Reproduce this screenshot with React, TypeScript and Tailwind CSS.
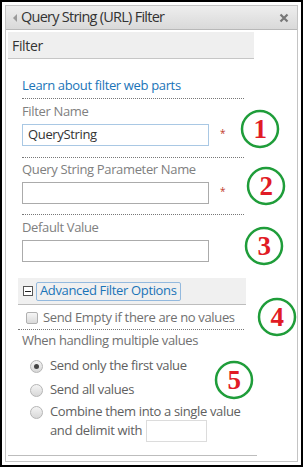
import React from "react";

const font = { fontFamily: '"Open Sans", "Noto Sans", sans-serif' };

function Badge({ n, x, y }: { n: string; x: number; y: number }) {
  return (
    <svg
      width="40"
      height="40"
      viewBox="0 0 40 40"
      className="absolute"
      style={{ left: x - 20, top: y - 20 }}
    >
      <circle cx="20" cy="20" r="18" fill="none" stroke="#1f9d3a" strokeWidth="2.5" />
      <text
        x="20"
        y="29"
        textAnchor="middle"
        fontFamily='"Liberation Serif", serif'
        fontWeight="bold"
        fontSize="27"
        fill="#e11b25"
      >
        {n}
      </text>
    </svg>
  );
}

function Dotted({ w = 222 }: { w?: number }) {
  return <div className="h-0 border-t border-dotted border-[#777]" style={{ width: w }} />;
}

function Radio({ checked }: { checked?: boolean }) {
  return (
    <span className="w-[13px] h-[13px] rounded-full border border-[#b5b5b5] bg-gradient-to-b from-[#f4f4f4] to-[#d8d8d8] flex items-center justify-center shrink-0">
      {checked && <span className="w-[5px] h-[5px] rounded-full bg-[#444]" />}
    </span>
  );
}

export default function App() {
  return (
    <div className="w-[303px] h-[467px] border-2 border-black bg-white p-[3px] relative tracking-[-0.35px]" style={font}>
      <div className="h-full border border-[#c4c4c4] flex flex-col">
        <div className="h-[24px] shrink-0 bg-gradient-to-b from-[#eeeeee] to-[#d9d9d9] border-b border-[#b8b8b8] flex items-center pl-[6px] pr-[8px]">
          <svg width="6" height="8" viewBox="0 0 6 8" className="mr-[3px]">
            <path d="M5 0 L1 4 L5 8 Z" fill="#9a9a9a" />
          </svg>
          <span className="text-[14.5px] tracking-[-0.75px] text-[#333] leading-none">Query String (URL) Filter</span>
          <span className="ml-auto">
            <svg width="10" height="10" viewBox="0 0 10 10">
              <path d="M1.5 1.5 L8.5 8.5 M8.5 1.5 L1.5 8.5" stroke="#777" strokeWidth="2.2" />
            </svg>
          </span>
        </div>
        <div className="pl-[2px] pt-[2px]">
          <div className="w-[246px] h-[27px] bg-[#efefef] border-b border-[#c6c6c6] flex items-center pl-[4px] text-[14px] text-[#333]">
            Filter
          </div>
        </div>
        <div className="pl-[16px] flex flex-col">
          <div className="mt-[18px] h-[18px] flex items-center text-[13px] text-[#1a74b8]">
            Learn about filter web parts
          </div>
          <div className="mt-[3px]"><Dotted /></div>
          <div className="mt-[4px] h-[18px] flex items-center text-[13px] text-[#808080]">Filter Name</div>
          <div className="mt-[3px] flex items-center">
            <div className="w-[187px] h-[22px] border border-[#a9c8e4] flex items-center pl-[5px] text-[13px] text-[#333]">
              QueryString
            </div>
            <span className="ml-[11px] text-[10px] text-[#c0392b] -mt-[4px]">*</span>
          </div>
          <div className="mt-[11px]"><Dotted /></div>
          <div className="mt-[3px] h-[18px] flex items-center text-[13px] text-[#808080]">Query String Parameter Name</div>
          <div className="mt-[3px] flex items-center">
            <div className="w-[187px] h-[22px] border border-[#ababab]" />
            <span className="ml-[11px] text-[10px] text-[#c0392b] -mt-[4px]">*</span>
          </div>
          <div className="mt-[10px]"><Dotted /></div>
          <div className="mt-[4px] h-[18px] flex items-center text-[13px] text-[#808080]">Default Value</div>
          <div className="mt-[3px]">
            <div className="w-[187px] h-[22px] border border-[#ababab]" />
          </div>
        </div>
        <div className="pl-[12px] flex flex-col">
          <div className="mt-[16px] w-[228px] h-[27px] bg-[#f0f0f0] border-b border-[#bdbdbd] flex items-center pl-[5px]">
            <span className="w-[10px] h-[10px] border border-[#555] bg-white flex items-center justify-center shrink-0">
              <span className="w-[6px] h-[1px] bg-[#222]" />
            </span>
            <span className="ml-[3px] h-[19px] px-[3px] border border-[#93b9de] rounded-[2px] flex items-center text-[13px] text-[#1a74b8]">
              Advanced Filter Options
            </span>
          </div>
          <div className="mt-[4px] h-[18px] flex items-center pl-[8px] text-[13px] text-[#707070]">
            <span className="w-[12px] h-[12px] rounded-[2px] border border-[#b0b0b0] bg-gradient-to-b from-[#f6f6f6] to-[#dadada] mr-[5px] shrink-0" />
            Send Empty if there are no values
          </div>
          <div className="mt-[2px]"><Dotted w={226} /></div>
        </div>
        <div className="pl-[16px] flex flex-col">
          <div className="mt-[2px] h-[18px] flex items-center text-[13px] text-[#707070]">When handling multiple values</div>
          <div className="mt-[7px] h-[18px] flex items-center pl-[8px] text-[13px] text-[#606060]">
            <Radio checked />
            <span className="ml-[7px]">Send only the first value</span>
          </div>
          <div className="mt-[6px] h-[18px] flex items-center pl-[8px] text-[13px] text-[#606060]">
            <Radio />
            <span className="ml-[7px]">Send all values</span>
          </div>
          <div className="mt-[4px] flex pl-[8px] text-[13px] text-[#606060]">
            <div className="h-[18px] flex items-center"><Radio /></div>
            <div className="ml-[7px] flex flex-col">
              <span className="h-[18px] flex items-center">Combine them into a single value</span>
              <div className="flex items-center -mt-[1px]">
                <span>and delimit with</span>
                <span className="ml-[4px] w-[61px] h-[22px] border border-[#dcdcdc]" />
              </div>
            </div>
          </div>
        </div>
        <div className="pl-[2px] mt-[13px]">
          <div className="w-[249px] h-0 border-t border-[#bdbdbd]" />
        </div>
      </div>
      <Badge n="1" x={258} y={127} />
      <Badge n="2" x={264} y={184} />
      <Badge n="3" x={262} y={244} />
      <Badge n="4" x={275} y={315} />
      <Badge n="5" x={232} y={378} />
    </div>
  );
}
